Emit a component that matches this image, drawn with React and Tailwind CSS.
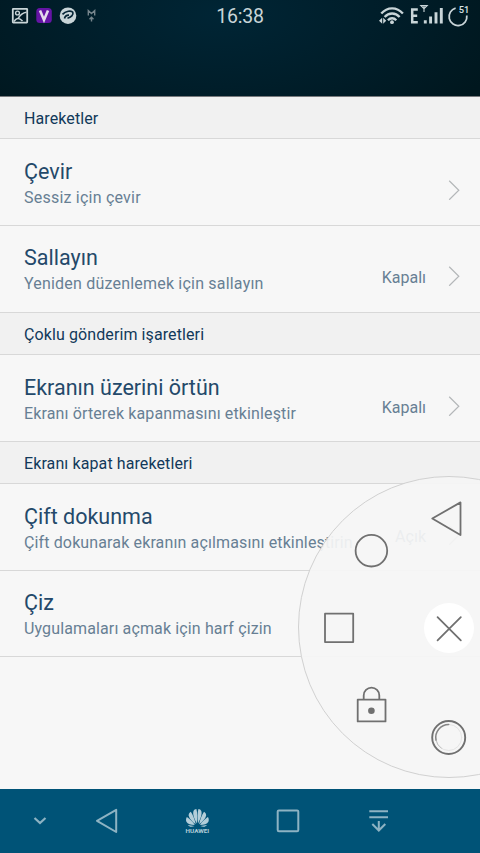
import React from "react";

function Chevron() {
  return (
    <svg width="12" height="20" viewBox="0 0 12 20" className="shrink-0" fill="none" stroke="#b4b7b9" strokeWidth="1.2">
      <path d="M1.2 .8 10.8 10.3 1.2 19.8" />
    </svg>
  );
}

function Section({ children }) {
  return (
    <div className="flex h-[42px] shrink-0 items-center border-b border-[#d8d8d8] bg-[#f1f1f1] px-6 pt-[3px]">
      <span className="text-[16px] leading-5 tracking-[0.1px] whitespace-nowrap text-[#12395a]">{children}</span>
    </div>
  );
}

function Row({ title, sub, value, subSpacing = "tracking-[0.13px]", size = "h-[87px] pt-[19px]" }) {
  return (
    <div className={`flex shrink-0 justify-between border-b border-[#d8d8d8] bg-[#f7f7f7] pr-5 pl-6 ${size}`}>
      <div className="flex flex-col whitespace-nowrap">
        <span className="text-[21.5px] leading-7 text-[#24496a]">{title}</span>
        <span className={`text-[16px] leading-[23px] text-[#677f94] ${subSpacing}`}>{sub}</span>
      </div>
      <div className="mt-[22px] -ml-20 flex h-5 items-center gap-[22px] self-start">
        <span className="pt-[3px] text-[16px] leading-5 text-[#677f94]">{value}</span>
        <Chevron />
      </div>
    </div>
  );
}

function StatusBar() {
  return (
    <div className="flex h-8 items-center justify-between text-[#c9d5d8]">
      <svg width="120" height="32" viewBox="0 0 120 32" fill="none" stroke="currentColor">
        <rect x="12.8" y="8.8" width="14.4" height="13.8" rx=".5" strokeWidth="1.8" />
        <circle cx="17.5" cy="13" r="1.9" strokeWidth="1.4" />
        <path d="M14 21.5c2.2-3.4 4.6-4.5 8.5-.5M18.5 17.8c1.8-3.2 4-5 8-5.6" strokeWidth="1.5" />
        <rect x="36.3" y="8" width="15.5" height="15" rx="3.5" fill="#6514a5" stroke="none" />
        <path d="m40 10.5 4 9.5 4-9.5" stroke="#e4daed" strokeWidth="2.6" />
        <circle cx="68" cy="15.7" r="8.3" fill="currentColor" stroke="none" />
        <path d="M62.5 14.3c3-3.2 8.8-4.2 10.3-2 1 2.4-1.8 5-5.3 5.9M64.5 18.5c.5-2.2 2.1-3.4 4.5-3.3" stroke="#062536" strokeWidth="1.7" />
        <path d="M88.3 15.5v-5l3.2 3 3.2-3v5M91.5 21.5v-4M89.5 19.2l2-2 2 2" stroke="#76858c" strokeWidth="1.4" />
      </svg>
      <span className="pt-px text-[19.5px] leading-6 tracking-[-0.2px]">16:38</span>
      <svg width="120" height="32" viewBox="360 0 120 32" fill="none" stroke="currentColor">
        <path d="M381.3 13.6c6-6.9 15.6-6.9 21.6 0M384.6 17c4.2-4.7 10.8-4.7 15 0M387.9 20.2c2.4-2.6 6-2.6 8.4 0" strokeWidth="2.3" />
        <circle cx="392" cy="22.2" r="1.9" fill="currentColor" stroke="none" />
        <path d="m379 20.7 3.2-3v6zM386.2 20.7l-3-3v6z" fill="currentColor" stroke="none" />
        <path d="M417.8 9.5h-5.6v12.8h5.6M412.2 15.7h5" strokeWidth="2.5" />
        <path d="M420.8 5.6h6.4l-3.2 3.2zM424 5.6V12" strokeWidth="1.1" />
        <path d="M425.3 20.2v3.2M430.6 16.6v6.8M436 12.3v11.1M441.3 8v15.4" strokeWidth="2.9" />
        <path d="M455.6 8.1a8.9 8.9 0 1 0 11.2 7.4" strokeWidth="1.8" />
        <text x="458.8" y="12.9" fill="#dce4e7" stroke="none" fontSize="9.3" fontWeight="500" fontFamily="Roboto, sans-serif">51</text>
      </svg>
    </div>
  );
}

function FloatingMenu() {
  return (
    <div className="absolute top-[476px] left-[298px] size-[302px] rounded-full border border-[#d1d1d1] bg-[#f5f5f5]/93">
      <svg className="absolute top-[23px] left-[132px]" width="34" height="38" viewBox="431 500 34 38" fill="none" stroke="#707070" strokeWidth="1.8" strokeLinejoin="round">
        <path d="M432.3 518.5 460.5 502.4V535Z" />
      </svg>
      <svg className="absolute top-[56px] left-[55px]" width="36" height="36" viewBox="354 533 36 36" fill="none" stroke="#707070" strokeWidth="1.8">
        <circle cx="371.4" cy="550.7" r="15.8" />
      </svg>
      <svg className="absolute top-[135px] left-[24px]" width="34" height="34" viewBox="0 0 34 34" fill="none" stroke="#707070" strokeWidth="1.8" strokeLinejoin="round">
        <rect x="2" y="1.7" width="28.2" height="28.4" />
      </svg>
      <div className="absolute top-[126px] left-[125px] flex size-[50px] items-center justify-center rounded-full bg-white">
        <svg width="27" height="27" viewBox="0 0 26 26" stroke="#707070" strokeWidth="1.7" strokeLinecap="round">
          <path d="m1.5 2 22.4 22.4m0-22.4L1.5 24.4" />
        </svg>
      </div>
      <svg className="absolute top-[209px] left-[57px]" width="32" height="38" viewBox="356 686 32 38" fill="none" stroke="#707070" strokeWidth="1.8" strokeLinejoin="round">
        <rect x="357.7" y="699.6" width="27.8" height="21.8" />
        <path d="M363.7 699.5v-4a7.8 7.8 0 0 1 15.6 0v4" />
        <circle cx="371.4" cy="710.8" r="3.3" fill="#707070" stroke="none" />
      </svg>
      <svg className="absolute top-[242px] left-[131px]" width="37" height="37" viewBox="430 719 37 37" fill="none" strokeLinecap="round">
        <circle cx="448.7" cy="737.5" r="16.5" stroke="#707070" strokeWidth="1.9" />
        <circle cx="448.7" cy="737.5" r="13" stroke="#e4e4e4" strokeWidth="1" />
        <path d="M436 740a13 13 0 0 0 5.5 8.4" stroke="#c0c0c0" strokeWidth="1" />
        <path d="M448.7 724.5A13 13 0 0 0 436 740" stroke="#858585" strokeWidth="1.5" />
      </svg>
    </div>
  );
}

function HuaweiLogo() {
  return (
    <svg width="26" height="26" viewBox="184 808 26 26" fill="#b3ced9">
      <path d="M196.8 823.5c-2.5-4.5-4.4-9.5-3.3-12.5.5-1.2 1.6-1.8 2.9-2 1 3.5 1.1 9.5.4 14.5z" />
      <path d="M198 823.5c2.5-4.5 4.4-9.5 3.3-12.5-.5-1.2-1.6-1.8-2.9-2-1 3.5-1.1 9.5-.4 14.5z" />
      <path d="M195.7 824.3c-3.6-2.6-6.8-6.1-7-9-.1-1.6.7-2.8 2.1-3.6 2.2 3.3 4.2 8.3 4.9 12.6z" />
      <path d="M199.1 824.3c3.6-2.6 6.8-6.1 7-9 .1-1.6-.7-2.8-2.1-3.6-2.2 3.3-4.2 8.3-4.9 12.6z" />
      <path d="M194.8 825.1c-4 0-7.2-1-8.4-3.3-.7-1.5-.4-3.4.5-4.7 3.1 2 6.3 5.2 7.9 8zM200 825.1c4 0 7.2-1 8.4-3.3.7-1.5.4-3.4-.5-4.7-3.1 2-6.3 5.2-7.9 8z" />
      <path d="M194.5 825.9c-2.6 1.2-5 1.3-6.7-.9zM200.3 825.9c2.6 1.2 5 1.3 6.7-.9z" />
      <text x="185.6" y="832.7" textLength="23.6" lengthAdjust="spacingAndGlyphs" fontSize="5.6" fontWeight="700" fontFamily="Roboto, sans-serif">HUAWEI</text>
    </svg>
  );
}

function NavBar() {
  return (
    <div className="flex h-16 shrink-0 items-center bg-[#005377] pl-[33px] text-[#8db3c3]">
      <svg width="14" height="10" viewBox="0 0 14 10" fill="none" stroke="currentColor" strokeWidth="2.2">
        <path d="m1.5 2 5.5 5 5.5-5" />
      </svg>
      <svg className="ml-[48px]" width="24" height="28" viewBox="95 807 24 28" fill="none" stroke="currentColor" strokeWidth="2" strokeLinejoin="round">
        <path d="M97 820.8 116.2 809.8V832Z" />
      </svg>
      <div className="ml-[65px]"><HuaweiLogo /></div>
      <svg className="ml-[66px]" width="24" height="24" viewBox="276 809 24 24" fill="none" stroke="currentColor" strokeWidth="2">
        <rect x="277.7" y="810.4" width="20.6" height="20.8" rx="1.2" />
      </svg>
      <svg className="ml-[68px]" width="22" height="24" viewBox="368 809 22 24" fill="none" stroke="currentColor" strokeWidth="2">
        <path d="M369.3 811.3H388M369.3 817.3H388M378.8 821v9.7M372.3 824l6.5 6.5 6.5-6.5" />
      </svg>
    </div>
  );
}

export default function App() {
  return (
    <div className="relative flex h-[853px] w-[480px] flex-col overflow-hidden bg-[#f7f7f7] font-['Roboto','Noto_Sans',sans-serif]">
      <div className="h-[97px] shrink-0 border-b border-[#77797c] bg-[radial-gradient(ellipse_300px_140px_at_46%_15%,#002535_0%,#001c27_65%,#00171e_100%)]">
        <StatusBar />
      </div>
      <Section>Hareketler</Section>
      <Row title="Çevir" sub="Sessiz için çevir" subSpacing="tracking-[0.22px]" />
      <Row title="Sallayın" sub="Yeniden düzenlemek için sallayın" value="Kapalı" subSpacing="tracking-[0.2px]" size="h-[87px] pt-[18px]" />
      <Section>Çoklu gönderim işaretleri</Section>
      <Row title="Ekranın üzerini örtün" sub="Ekranı örterek kapanmasını etkinleştir" value="Kapalı" />
      <Section>Ekranı kapat hareketleri</Section>
      <Row title="Çift dokunma" sub="Çift dokunarak ekranın açılmasını etkinleştirin" value="Açık" />
      <Row title="Çiz" sub="Uygulamaları açmak için harf çizin" size="h-[86px] pt-[18px]" />
      <div className="flex-1" />
      <NavBar />
      <FloatingMenu />
    </div>
  );
}
